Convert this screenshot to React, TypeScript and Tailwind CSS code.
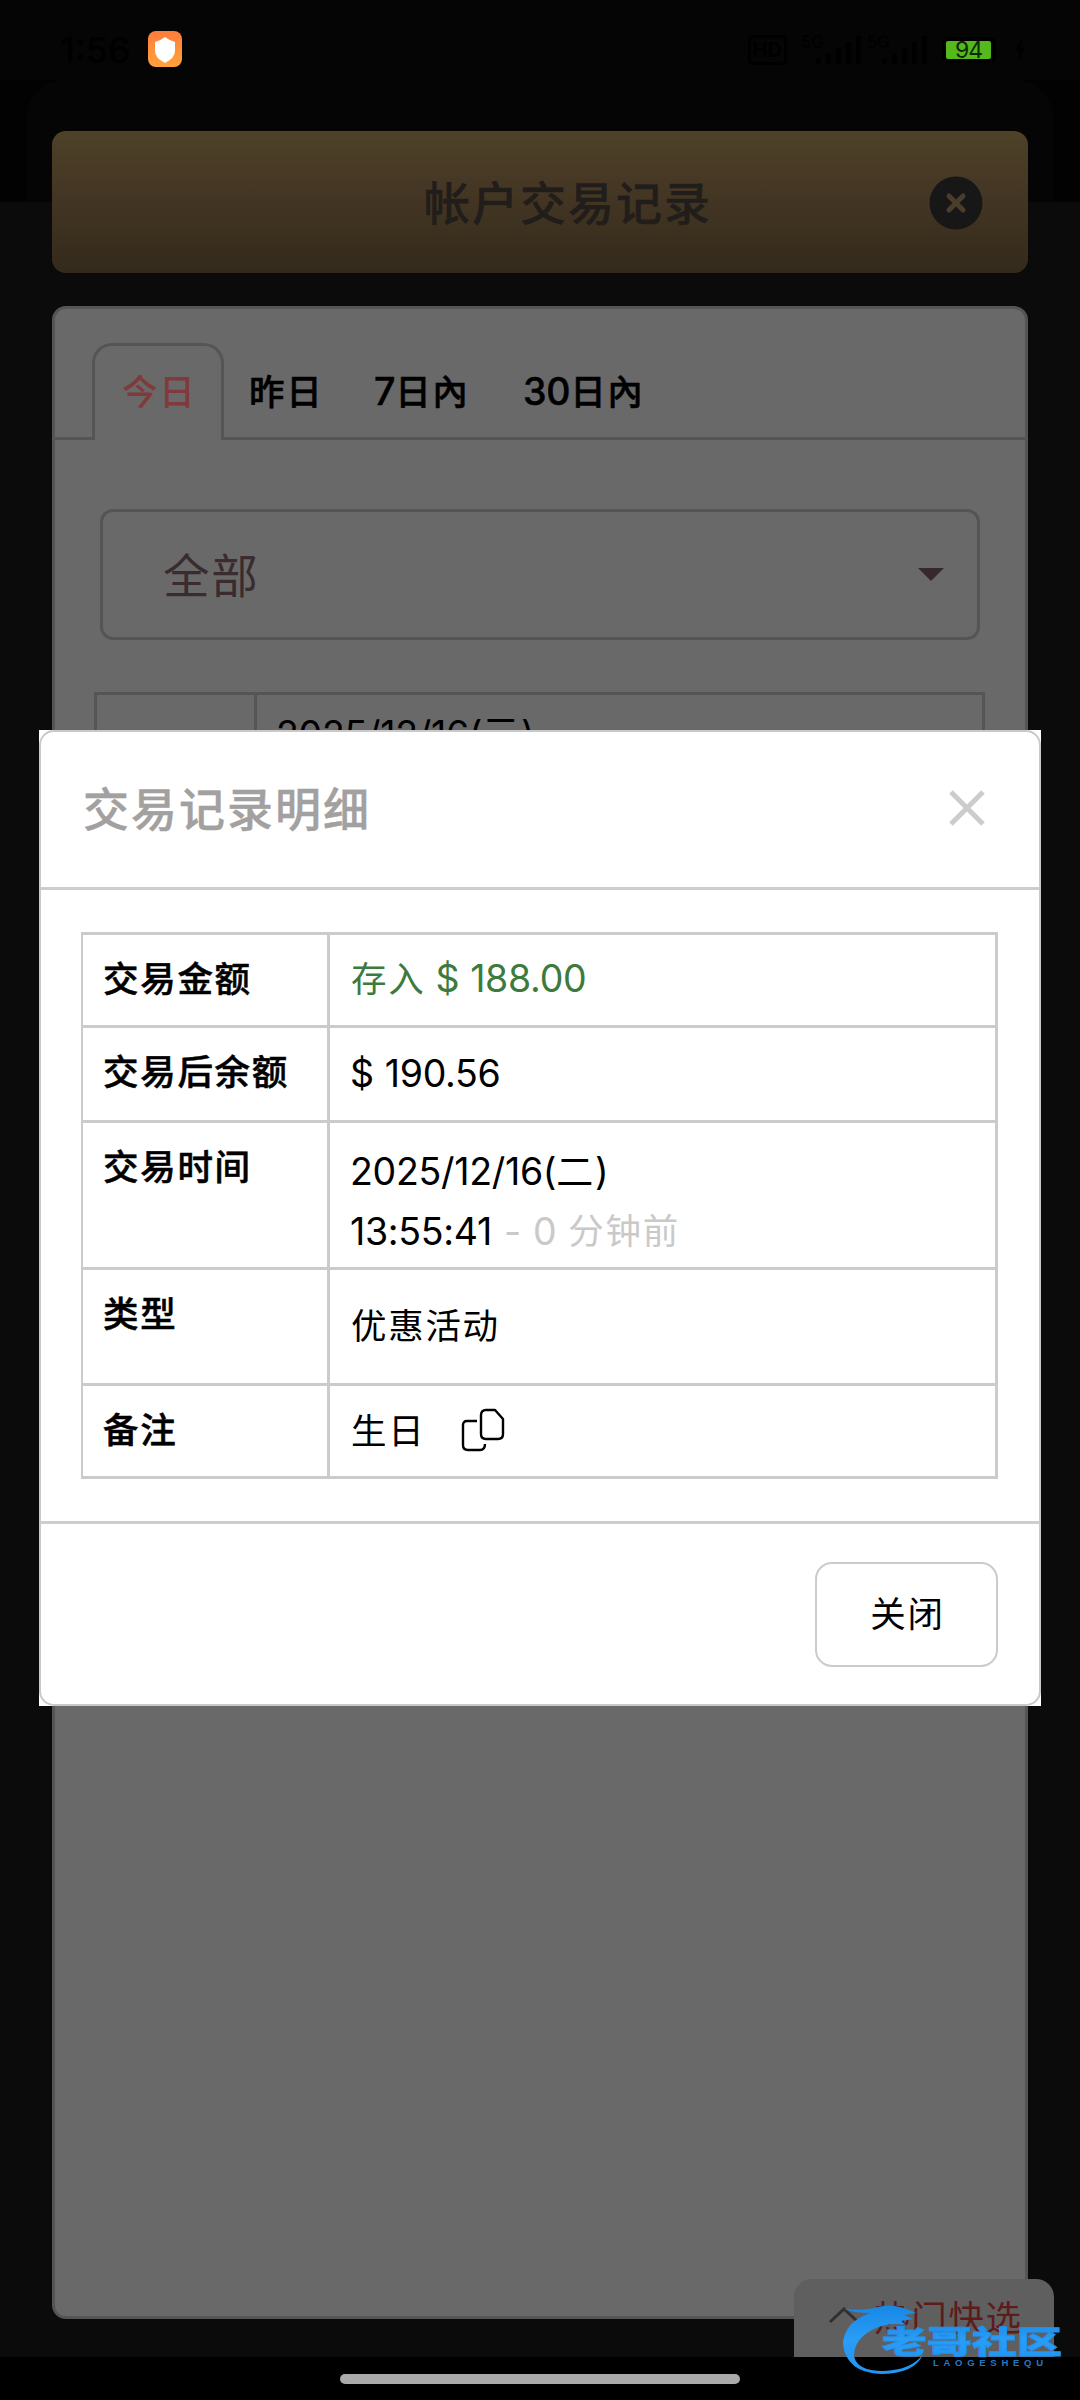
import { Fragment, type ReactNode } from "react";

const cn = (text: string, className = "text-[35.5px]") => (
  <span className={`font-['Noto_Sans_CJK_SC',sans-serif] tracking-[1.7px] ${className}`}>{text}</span>
);

const num = (text: string, className = "") => (
  <span className={`font-['Inter',sans-serif] text-[37.5px] tracking-[-0.3px] ${className}`}>{text}</span>
);

interface DetailRow {
  label: string;
  height: string;
  value: ReactNode;
}

const CopyIcon = () => (
  <svg className="mt-[2px] ml-[36px] h-[44px] w-[44px]" viewBox="0 0 44 44" fill="none" stroke="black" strokeWidth={2.4}>
    <path d="M25 2h9l8 9v15q0 5-5 5H25q-5 0-5-5V7q0-5 5-5z" strokeLinejoin="round" />
    <path d="M16 13H6q-4 0-4 4v20q0 5 5 5h12q5 0 5-6" />
  </svg>
);

const rows: DetailRow[] = [
  {
    label: "交易金额",
    height: "h-[93px]",
    value: (
      <div className="flex items-center pt-[11px] leading-[66px] text-[#3d7a3d]">
        {cn("存入", "text-[35.5px] relative -top-[2px]")}
        {num("$", "ml-[10px]")}
        {num("188.00", "ml-[11px]")}
      </div>
    ),
  },
  {
    label: "交易后余额",
    height: "h-[95px]",
    value: (
      <div className="flex items-center pt-[13px] leading-[66px]">
        {num("$", "-ml-[1px]")}
        {num("190.56", "ml-[11px]")}
      </div>
    ),
  },
  {
    label: "交易时间",
    height: "h-[147px]",
    value: (
      <div className="-ml-[1px] pt-[19px] leading-[60px]">
        <div className="flex h-[60px] items-center">
          {num("2025/12/16(")}
          {cn("二", "text-[37px] relative -top-[2px]")}
          {num(")")}
        </div>
        <div className="flex h-[60px] items-center">
          {num("13:55:41")}
          <span className="flex items-center text-[#c9c9c9]">
            {num("-", "ml-[12px]")}
            {num("0", "ml-[12px]")}
            {cn("分钟前", "text-[35.5px] ml-[12px] relative -top-[3px]")}
          </span>
        </div>
      </div>
    ),
  },
  {
    label: "类型",
    height: "h-[116px]",
    value: <div className="pt-[21px] leading-[66px]">{cn("优惠活动")}</div>,
  },
  {
    label: "备注",
    height: "h-[93px]",
    value: (
      <div className="flex items-center pt-[10px] leading-[66px]">
        {cn("生日")}
        <CopyIcon />
      </div>
    ),
  },
];

const SignalBars = () => (
  <svg className="h-[28px] w-[46px]" viewBox="0 0 46 28" fill="black">
    <rect x="0" y="22" width="5" height="6" />
    <rect x="10" y="17" width="5" height="11" />
    <rect x="20" y="12" width="5" height="16" />
    <rect x="30" y="6" width="5" height="22" />
    <rect x="40" y="0" width="5" height="28" />
  </svg>
);

const StatusBar = () => (
  <div className="flex h-[80px] items-center bg-[#050505] pt-[19px] pr-[54px] pl-[60px]">
    <span className="w-[88px] font-['Inter',sans-serif] text-[36px] leading-none font-medium text-black">1:56</span>
    <svg className="-mt-[20px] h-[36px] w-[34px] translate-y-[9px]" viewBox="0 0 34 36">
      <defs>
        <linearGradient id="shield" x1="0" y1="0" x2="0" y2="1">
          <stop offset="0" stopColor="#ff7d3b" />
          <stop offset="1" stopColor="#ffa23c" />
        </linearGradient>
      </defs>
      <rect width="34" height="36" rx="8" fill="url(#shield)" />
      <path d="M17 6q5 4 10 5v9q0 7-10 12Q7 27 7 20v-9q5-1 10-5z" fill="white" />
    </svg>
    <div className="ml-auto flex items-center font-['Inter',sans-serif] text-black">
      <span className="mr-[14px] rounded-[5px] border-[3px] border-black px-[2px] text-[20px] leading-[24px] font-bold">HD</span>
      <span className="-mt-[14px] -mr-[8px] text-[17px] leading-none">5G</span>
      <SignalBars />
      <span className="-mt-[14px] -mr-[8px] ml-[5px] text-[17px] leading-none">5G</span>
      <SignalBars />
      <span className="ml-[14px] flex h-[26px] w-[54px] items-center rounded-[6px] border-[4px] border-black">
        <span className="h-[18px] w-[45px] rounded-[2px] bg-[#55b81c] text-center text-[23px] leading-[19px] tracking-[-1px] text-[#0b2a02]">
          94
        </span>
      </span>
      <svg className="ml-[18px] h-[28px] w-[12px]" viewBox="0 0 14 28" fill="black">
        <path d="M9 0L1 16h5l-1 12 8-17H8z" />
      </svg>
    </div>
  </div>
);

const Tabs = () => (
  <div className="flex h-[131px] items-end font-['Noto_Sans_CJK_SC',sans-serif] text-[35.5px] font-medium tracking-[1.7px] text-black">
    <div className="h-full w-[37px] border-b-[3px] border-[#555]" />
    <div className="h-[97px] w-[132px] rounded-t-[20px] border-[3px] border-b-0 border-[#555] pl-[27px] leading-[88px] text-[#7f3b3b]">
      今日
    </div>
    <div className="flex h-full flex-1 border-b-[3px] border-[#555] pt-[34px] leading-[94px] [-webkit-text-stroke:0.5px]">
      <span className="ml-[25px] w-[125px]">昨日</span>
      <span className="w-[149px]">
        {num("7", "font-medium")}日內
      </span>
      <span>
        {num("30", "font-medium")}日內
      </span>
    </div>
  </div>
);

const Watermark = () => (
  <svg className="absolute top-[2300px] left-[836px] h-[80px] w-[236px]" viewBox="0 0 236 80">
    <defs>
      <linearGradient id="wave" x1="0" y1="0" x2="0" y2="1">
        <stop offset="0" stopColor="#1787e6" />
        <stop offset="0.5" stopColor="#2a9df5" />
        <stop offset="1" stopColor="#1f96f5" />
      </linearGradient>
    </defs>
    <path
      d="M8 9q20 2 34-2 16-5 38 6l-12 2 9 4-12 2 5 4q-16-3-30 3-22 10-22 28 3 15 29 15 29-1 40-17-8 20-43 20Q10 72 7 44 8 22 34 13 18 13 8 9z"
      fill="url(#wave)"
    />
    <text x="46" y="53" textLength="180" lengthAdjust="spacingAndGlyphs" fontFamily="Noto Sans CJK SC" fontSize="31" fontWeight="900" fill="url(#wave)" stroke="#1f92ee" strokeWidth="0.8">
      老哥社区
    </text>
    <text x="97" y="66" textLength="110" fontFamily="Liberation Sans" fontSize="9.5" fontWeight="700" fill="#2479c4">
      LAOGESHEQU
    </text>
  </svg>
);

export default function App() {
  return (
    <div className="relative h-[2400px] w-[1080px] overflow-hidden bg-[#0b0b0b]">
      <StatusBar />

      {/* Fondo de la página */}
      <div className="flex h-[2277px] flex-col bg-[linear-gradient(#020202_122px,#0b0b0b_122px)] px-[26px]">
        <div className="rounded-t-[40px] bg-[linear-gradient(#050505_122px,#0b0b0b_122px)] px-[26px] pt-[51px]">
          <header className="flex h-[142px] items-center rounded-[14px] bg-[linear-gradient(#4e4228,#463825_35%,#342a1b)] pr-[45px] pl-[372px]">
            <h1 className="flex-1 font-['Noto_Sans_CJK_SC',sans-serif] text-[46px] font-medium tracking-[2px] text-[#211d1b]">
              <span className="relative -top-[2px] [-webkit-text-stroke:0.4px]">帐户交易记录</span>
            </h1>
            <svg className="mt-[2px] h-[54px] w-[54px]" viewBox="0 0 54 54">
              <circle cx="27" cy="27" r="26.5" fill="#171718" />
              <path d="M20 20l14 14M34 20L20 34" stroke="#4a3e2b" strokeWidth="5" strokeLinecap="round" />
            </svg>
          </header>

          <section className="mt-[33px] h-[2013px] rounded-[14px] border-[3px] border-[#555] bg-[#696969]">
            <Tabs />
            <div className="mt-[69px] ml-[45px] flex h-[131px] w-[880px] items-center justify-between rounded-[13px] border-[3px] border-[#555] pr-[33px] pl-[60px]">
              {cn("全部", "text-[46.5px] text-[#3a2c2e] relative -top-[2px]")}
              <svg className="h-[13px] w-[26px]" viewBox="0 0 26 13">
                <path d="M0 0h26L13 13z" fill="#36282b" />
              </svg>
            </div>
            <div className="mt-[52px] ml-[39px] flex h-[140px] w-[891px] border-[3px] border-[#555]">
              <div className="w-[160px] border-r-[3px] border-[#555]" />
              <div className="flex h-[80px] items-center pl-[19px] text-black">
                {num("2025/12/16(")}
                {cn("二", "text-[37px] relative -top-[4px]")}
                {num(")")}
              </div>
            </div>
          </section>
        </div>
      </div>
      <div className="flex h-[43px] justify-center bg-black pt-[17px]">
        <div className="h-[10px] w-[400px] rounded-full bg-[#aaa]" />
      </div>

      {/* Pestaña flotante */}
      <div className="absolute top-[2279px] left-[794px] flex h-[78px] w-[260px] items-start rounded-t-[18px] bg-[#5f5f5f] pl-[34px] text-[#5e1b1b]">
        <svg className="mt-[28px] mr-[14px] h-[17px] w-[32px]" viewBox="0 0 32 17" fill="none">
          <path d="M2 15L16 2l14 13" stroke="#303030" strokeWidth="3" />
        </svg>
        {cn("热门快选", "text-[35.5px] leading-[74px]")}
      </div>

      {/* Modal de detalle */}
      <div className="absolute top-[730px] left-[39px] h-[976px] w-[1002px] bg-white">
        <div className="flex h-full flex-col rounded-[15px] border-[2.5px] border-[#c9c9c9]">
          <div className="flex h-[158px] items-center justify-between border-b-[3px] border-[#cdcdcd] pr-[54px] pl-[42px]">
            <h2 className="font-['Noto_Sans_CJK_SC',sans-serif] text-[46px] font-medium tracking-[2px] text-[#a3a0a0]">
              <span className="relative -top-[3px] [-webkit-text-stroke:0.4px]">交易记录明细</span>
            </h2>
            <svg className="-mt-[3px] h-[36px] w-[36px]" viewBox="0 0 36 36">
              <path d="M2 2l32 32M34 2L2 34" stroke="#ccc" strokeWidth="5" />
            </svg>
          </div>
          <div className="mr-[41px] ml-[40px] mt-[42px] grid grid-cols-[247px_1fr] border-t-[3px] border-l-2 border-[#cbcbcb] text-black">
            {rows.map((row) => (
              <Fragment key={row.label}>
                <div className={`border-r-[3px] border-b-[3px] border-[#cbcbcb] pt-[9px] pl-[20px] leading-[66px] ${row.height}`}>
                  {cn(row.label, "text-[35.5px] font-medium [-webkit-text-stroke:0.5px]")}
                </div>
                <div className={`border-r-[3px] border-b-[3px] border-[#cbcbcb] pl-[21px] ${row.height}`}>{row.value}</div>
              </Fragment>
            ))}
          </div>
          <div className="mt-[42px] flex flex-1 justify-end border-t-[3px] border-[#cdcdcd] pt-[38px] pr-[41px]">
            <button className="h-[105px] w-[183px] rounded-[17px] border-[2.5px] border-[#cbcbcb] pb-[6px] pl-[2px] text-black">{cn("关闭")}</button>
          </div>
        </div>
      </div>

      <Watermark />
    </div>
  );
}
